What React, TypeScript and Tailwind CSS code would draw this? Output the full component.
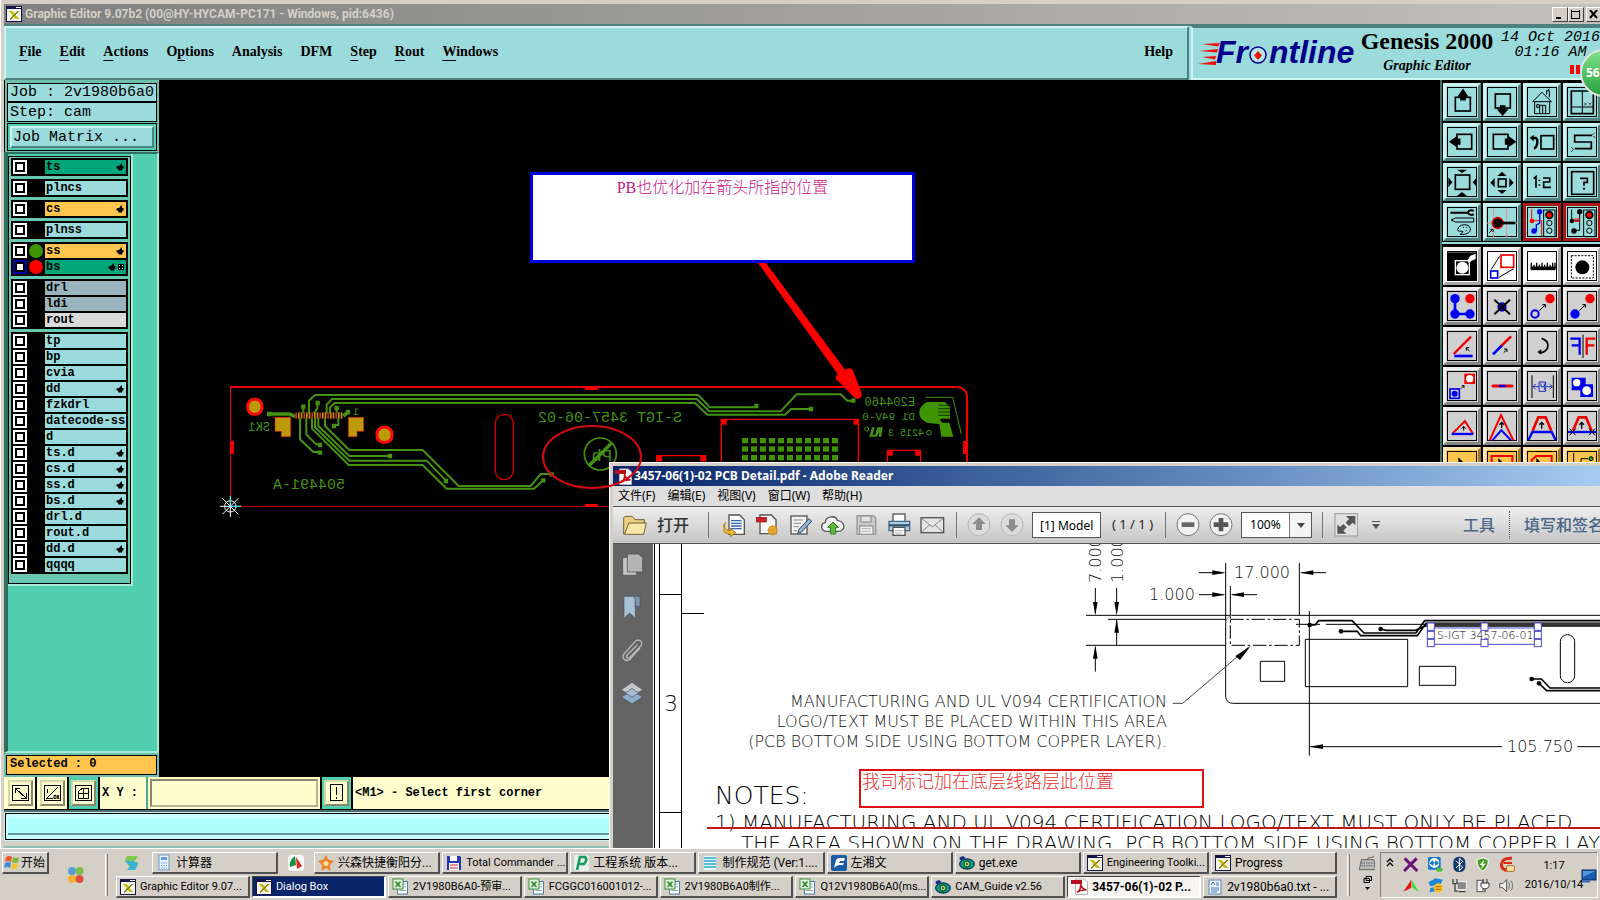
import React from 'react';

type Kids = { children?: React.ReactNode };

const MONO = "font-['Liberation_Mono',monospace]";
const UI = "font-['Noto_Sans','Noto_Sans_CJK_SC',sans-serif]";
const BAR = "font-['Roboto','Noto_Sans_CJK_SC',sans-serif]";

/* ---------- shared glyphs ---------- */

function XWindowIcon() {
  return (
    <svg width="16" height="16" viewBox="0 0 16 16" className="shrink-0" shapeRendering="crispEdges">
      <rect width="16" height="16" fill="#15154a" />
      <rect x="10" y="1" width="5" height="1" fill="#fff" />
      <rect x="1" y="3" width="14" height="12" fill="#f4f4ee" />
      <path d="M3 5h4l6 8H9z" fill="#c8c020" />
      <path d="M12.500 5L4 13.500" stroke="#8a8a10" strokeWidth="1.500" fill="none" />
    </svg>
  );
}

function Hand() {
  return (
    <svg width="8" height="8" viewBox="0 0 8 8" className="shrink-0">
      <path d="M0.500 3.600L3.400 2.800 5 0.500h1v2.500h1.500v2.500H6.600L6 7.500H2.500L2 5.400H0.500z" fill="#000" />
    </svg>
  );
}

function ExcelIcon() {
  return (
    <svg width="17" height="17" viewBox="0 0 17 17" className="shrink-0">
      <rect x="5.500" y="3.500" width="10" height="12.500" fill="#fff" stroke="#4a7db0" />
      <path d="M11 6h3M11 9h3M7 12.500h7" stroke="#8ab" />
      <rect x="1" y="1" width="10" height="10" fill="#e6f4e2" stroke="#3f8f3a" />
      <path d="M3.500 3.500l5 5.500M8.500 3.500l-5 5.500" stroke="#2c8a2c" strokeWidth="1.800" />
    </svg>
  );
}

function AdobeIcon() {
  return (
    <svg width="17" height="17" viewBox="0 0 17 17" className="shrink-0">
      <path d="M4.500 1h9l3 3v12.500h-12z" fill="#fff" stroke="#b9b0b0" />
      <path d="M0 2h11v4H0z" fill="#b5121b" />
      <path d="M6 14.500c3-2 4-5 3.500-8.500 1 4 3 5.500 6 6-4-.5-7 .5-9.500 2.500z" fill="none" stroke="#c0141d" strokeWidth="1.500" />
    </svg>
  );
}

/* ---------- title and header ---------- */

function WinButton({ label, children }: { label: string } & Kids) {
  return (
    <button aria-label={label} className="flex h-[15px] w-4 items-center justify-center border border-t-white border-l-white border-r-[#404040] border-b-[#404040] bg-[#d4d0c8]">
      <svg width="10" height="9" viewBox="0 0 10 9" fill="none" stroke="#000" shapeRendering="crispEdges">{children}</svg>
    </button>
  );
}

function TitleBar() {
  return (
    <div className="flex h-5 shrink-0 items-center overflow-hidden bg-linear-to-r from-[#808080] to-[#c4c2be] pl-[2px]">
      <XWindowIcon />
      <span className={`${BAR} ml-[3px] grow text-[12px] leading-5 font-bold whitespace-nowrap text-[#d4d0c8]`}>
        Graphic Editor 9.07b2 (00@HY-HYCAM-PC171 - Windows, pid:6436)
      </span>
      <div className="-mr-[2px] flex shrink-0">
        <WinButton label="Minimize"><path d="M1 7.500h5" strokeWidth="2" /></WinButton>
        <WinButton label="Maximize"><path d="M1 1h8M.5 0v8.500h8V0" strokeWidth="1" /></WinButton>
        <div className="w-[2px]" />
        <WinButton label="Close"><path d="M1 0l7 8M8 0L1 8" strokeWidth="2" shapeRendering="auto" /></WinButton>
      </div>
    </div>
  );
}

const MENUS: [string, string, string][] = [
  ['', 'F', 'ile'], ['', 'E', 'dit'], ['', 'A', 'ctions'], ['O', 'p', 'tions'],
  ['Analysis', '', ''], ['DFM', '', ''], ['', 'S', 'tep'], ['', 'R', 'out'], ['', 'W', 'indows'],
];

function FrontlineLogo() {
  return (
    <svg width="162" height="42" viewBox="0 -6 162 42" className="shrink-0" aria-label="Frontline">
      <g fill="#f01010">
        <path d="M5 6l18-1-2 3.500zM2 13l19-2-1 3.500zM5 19l14-1-1 3.500zM1 26l18-3v4z" />
      </g>
      <g fontFamily="Liberation Sans, sans-serif" fontWeight="700" fontStyle="italic" fontSize="32" fill="#00008b">
        <text x="19" y="25">Fr</text>
        <text x="72" y="25">ntline</text>
      </g>
      <circle cx="61" cy="17" r="8" fill="#b8e6e6" stroke="#00008b" strokeWidth="1.500" />
      <path d="M61 13l4 4.500-4 4.500-4-4.500z" fill="#f01010" />
    </svg>
  );
}

function Header() {
  return (
    <header className="flex h-14 shrink-0 border-t-2 border-[#4f8080] bg-[#9bdbdb] font-['Liberation_Serif',serif] font-bold text-black">
      <nav className="flex grow items-center gap-[18px] border-2 border-t-[#cdf3f0] border-l-[#cdf3f0] border-r-[#4f8080] border-b-[#4f8080] pr-[14px] pb-[3px] pl-[13px] text-[14px] leading-5">
        {MENUS.map(([a, u, b]) => (
          <button key={a + u + b}>
            {a}
            {u && <span className="underline underline-offset-4">{u}</span>}
            {b}
          </button>
        ))}
        <button className="ml-auto">Help</button>
      </nav>
      <div className="ml-[2px] flex w-[409px] shrink-0 border-2 border-r-0 border-t-[#4f8080] border-l-[#cdf3f0] border-b-[#cdf3f0] pl-1">
        <div className="pt-1"><FrontlineLogo /></div>
        <div className="ml-px flex w-[134px] shrink-0 flex-col items-center">
          <span className="text-[24px] leading-[26px] whitespace-nowrap">Genesis 2000</span>
          <span className="text-[14px] leading-6 italic">Graphic Editor</span>
        </div>
        <div className={`${MONO} ml-[7px] flex shrink-0 flex-col items-center pt-[2px] text-[15px] leading-[15px] font-normal italic`}>
          <span>14 Oct 2016</span>
          <span>01:16 AM</span>
          <span className="mt-[5px] ml-[48px] flex gap-[2px]">
            <span className="h-[9px] w-1 bg-[#f00]" />
            <span className="h-[9px] w-1 bg-[#f00]" />
          </span>
        </div>
      </div>
    </header>
  );
}

/* ---------- layer list ---------- */

type Layer = { n: string; bg?: string; hand?: boolean; dot?: string; active?: boolean };
const T = 'bg-[#9bdbdb]';
const GROUPS: Layer[][] = [
  [{ n: 'ts', bg: 'bg-[#00a57a]', hand: true }],
  [{ n: 'plncs' }],
  [{ n: 'cs', bg: 'bg-[#ffc54e]', hand: true }],
  [{ n: 'plnss' }],
  [
    { n: 'ss', bg: 'bg-[#ffc54e]', hand: true, dot: 'bg-[#409400]' },
    { n: 'bs', bg: 'bg-[#00a57a]', hand: true, dot: 'bg-[#ff0000]', active: true },
  ],
  [{ n: 'drl', bg: 'bg-[#9bb5be]' }, { n: 'ldi', bg: 'bg-[#9bb5be]' }, { n: 'rout', bg: 'bg-[#dadada]' }],
  [
    { n: 'tp' }, { n: 'bp' }, { n: 'cvia' }, { n: 'dd', hand: true }, { n: 'fzkdrl' }, { n: 'datecode-ss' },
    { n: 'd' }, { n: 'ts.d', hand: true }, { n: 'cs.d', hand: true }, { n: 'ss.d', hand: true },
    { n: 'bs.d', hand: true }, { n: 'drl.d' }, { n: 'rout.d' }, { n: 'dd.d', hand: true }, { n: 'qqqq' },
  ],
];

function LayerRow({ l }: { l: Layer }) {
  return (
    <label className="flex h-4 items-center">
      <input
        type="checkbox"
        className={`m-0 h-[14px] w-[14px] shrink-0 appearance-none border-2 ${l.active ? 'border-[#0000a8] bg-white' : 'border-white bg-white'} shadow-[inset_0_0_0_2px_#000]`}
      />
      <span className="flex w-[18px] shrink-0 justify-center">
        {l.dot && <span className={`h-[14px] w-[14px] rounded-full ${l.dot}`} />}
      </span>
      <span className={`flex h-[14px] min-w-0 grow items-center justify-between pl-px text-[12px] leading-[14px] font-bold whitespace-nowrap ${l.bg ?? T}`}>
        {l.n}
        {l.hand && (
          <span className="flex items-center gap-[2px] pr-[2px]">
            <Hand />
            {l.active && (
              <svg width="6" height="6" viewBox="0 0 6 6" shapeRendering="crispEdges">
                <rect width="6" height="6" fill="#000" />
                <path d="M1 1h1v1H1zM4 1h1v1H4zM1 4h1v1H1zM4 4h1v1H4z" fill="#cfe" />
              </svg>
            )}
          </span>
        )}
      </span>
    </label>
  );
}

function Sidebar() {
  return (
    <aside className={`${MONO} flex w-[155px] shrink-0 flex-col bg-[#52cfb0] text-black`}>
      <div className="shrink-0 border-l border-black bg-[#6fbfae] px-[2px] pt-[3px] pb-px text-[15px] font-medium">
        <div className="h-[19px] border border-black bg-[#9bdbdb] pl-[2px] leading-[17px] whitespace-nowrap">Job : 2v1980b6a0</div>
        <div className="h-5 border border-black bg-[#9bdbdb] pl-[2px] leading-[19px]">Step: cam</div>
        <div className="mt-px border border-black bg-[#52cfb0] p-[2px]">
          <button className="block h-[22px] w-full border-2 border-t-[#cdf3f0] border-l-[#cdf3f0] border-r-[#4f8080] border-b-[#4f8080] bg-[#9bdbdb] pl-px text-left leading-[19px]">
            Job Matrix ...
          </button>
        </div>
      </div>
      <div className="min-h-0 grow border-t-2 border-r-2 border-b-2 border-l-[4px] border-t-[#2f6f60] border-r-[#a5ead8] border-b-[#a5ead8] border-l-[#2f6f60]">
        <div className="w-[125px] border-r-2 border-b-2 border-[#a5ead8] pt-[2px]">
          <div className="flex flex-col gap-[3px] border border-black bg-[#6ac8b2] px-[2px] pt-px pb-[9px]">
            {GROUPS.map((g, i) => (
              <div key={i} className="border border-black bg-black pr-px pl-px">
                {g.map((l) => <LayerRow key={l.n} l={l} />)}
              </div>
            ))}
          </div>
        </div>
      </div>
      <div className="shrink-0 bg-[#6fbfae] px-[2px] py-[2px]">
        <div className="h-5 border border-black bg-[#ffc54e] pl-[3px] text-[12px] leading-[17px] font-bold">Selected : 0</div>
      </div>
    </aside>
  );
}

/* ---------- board view ---------- */

function Mirror({ x, y, size, children }: { x: number; y: number; size: number } & Kids) {
  return (
    <text transform={`translate(${x} ${y}) scale(-1 1)`} fontSize={size}>{children}</text>
  );
}

const GREEN = '#449310';
const sq = (x: number, y: number, s = 13) => `M${x - s / 2} ${y - s / 2}h${s}v${s}h-${s}z`;
const COLS = [0, 1, 2, 3, 4, 5, 6, 7, 8, 9, 10];
const TICKS = [0, 1, 2, 3, 4, 5, 6, 7, 8, 9, 10, 11, 12, 13, 14, 15, 16, 17];

function BoardView() {
  return (
    <main className="min-w-0 grow overflow-hidden bg-black">
      <svg className="block h-full w-full" aria-label="Board">
        <g transform="translate(-159 -80)">
          <g fill="none" stroke="#f00000" shapeRendering="crispEdges">
            <path d="M230.500 506V387" />
            <path d="M230 387H957Q967 388 967 397V506" strokeWidth="2" />
            <path d="M230 506.500H967" stroke="#c00000" />
            <path d="M232 441v13M965 441v13" strokeWidth="4" />
            <path d="M585 388h13M585 505h13" strokeWidth="3" />
          </g>
          <g transform="translate(210 370) scale(.33333)">
            <g fill="none" stroke={GREEN} strokeWidth="6">
              <path d="M297 130V92L315 75H1465L1500 112H1635" />
              <path d="M350 130V104L366 87H1460L1498 124H1712L1760 73H1892L1912 92H1930" />
              <path d="M360 130V112L374 99H1455L1492 134H1725L1743 117H1803" />
              <path d="M270 145V208L310 246H330" />
              <path d="M289 145V193L318 223H330" />
              <path d="M306 145V176L416 285H638L710 356H972L1000 330" />
              <path d="M315 145V172L418 272H650L708 332" />
              <path d="M325 145V168L418 258H540" />
              <path d="M345 145V168L418 240H638L746 348H962L992 312H1025" />
              <path d="M385 145V165H372M322 100V115L312 130M280 112V130M380 115V130" />
              <path d="M172 132H240L256 140M400 138L416 125" strokeWidth="11" />
            </g>
            <path
              fill={GREEN}
              d={[[280, 110], [323, 99], [380, 114], [372, 168], [330, 225], [330, 248], [540, 258], [708, 333], [1000, 331], [1025, 313], [178, 132], [414, 126], [1639, 108], [1930, 92], [1803, 117]].map(([x, y]) => sq(x, y)).join('')}
            />
            {TICKS.map((i) => (
              <rect key={i} x={256 + i * 8} y="127" width="5" height="19" fill={i % 3 ? '#c08a10' : '#d03000'} />
            ))}
            <g fill="#bd9a0c" stroke="#d02000" strokeWidth="2">
              <path d="M195 142h47v58h-28v-16h-19zM415 142h46v42h-20v16h-26z" />
            </g>
            <g fill="#bd9a0c" stroke="#ff0808" strokeWidth="9">
              <rect x="113" y="88" width="43" height="45" rx="20" />
              <rect x="501" y="172" width="45" height="45" rx="20" />
            </g>
            <rect x="856" y="133" width="54" height="196" rx="27" fill="none" stroke="#d00000" strokeWidth="4" />
            <g fill="none" stroke={GREEN} strokeWidth="5">
              <circle cx="1171" cy="252" r="48" />
              <path d="M1136 288L1206 218" strokeWidth="10" />
            </g>
            <g stroke="#fff" strokeWidth="3" fill="none">
              <circle cx="61" cy="409" r="17" />
              <path d="M61 378v63M30 409h63M37 385l48 48M85 385l-48 48" />
              <path d="M61 378v31M61 409h32" stroke="#30e0f0" />
            </g>
          </g>
          <g transform="translate(610 370) scale(.33333)">
            <g fill="none" stroke="#f00000" strokeWidth="4">
              <path d="M334 300V148H745V300M140 300V257H287V300M832 300V241H932V300" />
            </g>
            <path fill="#f00000" d={[[342, 156], [739, 156], [148, 265], [279, 265], [840, 249], [924, 249]].map(([x, y]) => sq(x, y, 17)).join('')} />
            {[204, 229, 255].map((y) => COLS.map((c) => (
              <rect key={`${y}-${c}`} x={396 + c * 27} y={y} width="18" height="16" fill="#409400" />
            )))}
            <path fill="#409400" d="M952 96h52l16 14v36h-28q-4 8 6 12h20l12 42h-36l-6-38-26-2c-22-4-34-16-34-32 0-14 10-26 24-32z" />
            <path d="M985 106h40M985 116h40M985 126h40M985 136h40" stroke="#000" strokeWidth="2" />
            <path d="M948 82H1028L1054 192" fill="none" stroke={GREEN} strokeWidth="3" />
            <path d="M778 200l8-28h8l-6 22h8l6-22h16l-4 28h-8l2-14-8 14z" fill={GREEN} />
            <g fill="none" stroke={GREEN} strokeWidth="3"><circle cx="770" cy="177" r="6" /><circle cx="957" cy="188" r="7" /></g>
          </g>
          <g fill={GREEN} fontFamily="Liberation Mono, monospace">
            <Mirror x={682} y={422} size={15}>S-IGT 3457-06-02</Mirror>
            <Mirror x={270} y={431} size={12}>SK1</Mirror>
            <Mirror x={359} y={415} size={10}>1</Mirror>
            <Mirror x={345} y={489} size={15}>504491-A</Mirror>
            <Mirror x={915} y={406} size={12}>E204460</Mirror>
            <Mirror x={915} y={420} size={11}>D1 94V-0</Mirror>
            <Mirror x={924} y={436} size={10}>4215 3</Mirror>
            <Mirror x={612} y={461} size={17}>Pb</Mirror>
          </g>
        </g>
      </svg>
    </main>
  );
}

/* ---------- tool palette ---------- */

function Tool({ c, r, top = 32, face, name, children }: { c: number; r: number; top?: number; face: string; name: string } & Kids) {
  const x = 47 + 120 * c;
  const y = top + 120 * r;
  return (
    <button aria-label={name} className={`block h-[38px] w-[38px] border-[3px] ${face}`}>
      <svg width="32" height="32" viewBox={`${x} ${y} 96 96`} fill="none" stroke="#000" strokeWidth="5">
        <rect x={x + 4.5} y={y + 4.5} width="87" height="87" strokeWidth="3" />
        {children}
      </svg>
    </button>
  );
}

const TEAL = 'bg-[#9bdbdb] border-t-[#cdf3f0] border-l-[#cdf3f0] border-r-[#4f8080] border-b-[#4f8080]';
const RED = 'bg-[#9bdbdb] border-[#a81818]';
const WHITE = 'bg-white border-t-[#f4f4f4] border-l-[#f4f4f4] border-r-[#a8a8a8] border-b-[#a8a8a8]';
const GRAY = 'bg-[#d0d0d0] border-t-[#f0f0f0] border-l-[#f0f0f0] border-r-[#888] border-b-[#888]';
const ORANGE = 'bg-[#ffc54e] border-t-[#ffe6b0] border-l-[#ffe6b0] border-r-[#a07820] border-b-[#a07820]';
const K = '#000';
const B = '#0000f0';
const R = '#f00000';

function Palette() {
  return (
    <aside className="flex w-40 shrink-0 flex-col overflow-hidden border-l-2 border-[#3f7068] bg-black">
      <div className="grid shrink-0 grid-cols-[38px_38px_38px_38px] gap-[2px] pt-[3px] pb-px pl-px">
        <Tool c={0} r={0} face={TEAL} name="Pan up"><rect x="75" y="66" width="45" height="41" /><path d="M92 73V62h-6l12-18 12 18h-6v11z" fill={K} /></Tool>
        <Tool c={1} r={0} face={TEAL} name="Pan down"><rect x="195" y="56" width="45" height="42" /><path d="M211 92v12h-6l12 14 12-14h-6V92z" fill={K} /></Tool>
        <Tool c={2} r={0} face={TEAL} name="Home"><path d="M307 79l28-28 28 28zM313 80v35h45V80M328 115V90h18v25M337 90v25M319 88h8v8h-8zM349 58V46h8v20M351 45l6-4" strokeWidth="3" /></Tool>
        <Tool c={3} r={0} face={TEAL} name="Coordinates"><path d="M423 47h66v68h-66z" strokeWidth="5" /><path d="M423 95h66M456 47v68" strokeWidth="3" /><path d="M462 82l7 8M469 82l-7 8M475 82l4 4 4-4M479 86v4" strokeWidth="2" /></Tool>
        <Tool c={0} r={1} face={TEAL} name="Pan left"><rect x="80" y="177" width="44" height="44" /><path d="M88 192H77v-5l-17 12 17 12v-5h11z" fill={K} /></Tool>
        <Tool c={1} r={1} face={TEAL} name="Pan right"><rect x="189" y="177" width="44" height="44" /><path d="M226 192h11v-5l17 12-17 12v-5h-11z" fill={K} /></Tool>
        <Tool c={2} r={1} face={TEAL} name="Previous view"><rect x="332" y="181" width="38" height="40" /><path d="M307 188h10c6 4 6 26-6 32" strokeWidth="7" /><path d="M298 188l12-10v20z" fill={K} stroke="none" /></Tool>
        <Tool c={3} r={1} face={TEAL} name="Serpent"><path d="M485 180h-52v20h50v20h-50" strokeWidth="5" /><path d="M485 180l8-8M488 182l8 6M430 222l-8-6M430 222l-8 8" strokeWidth="2" /></Tool>
        <Tool c={0} r={2} face={TEAL} name="Zoom in"><rect x="75" y="299" width="43" height="43" /><path d="M80 283h30l-15 10zM80 362h30l-15-12zM54 306v30l12-15zM140 306v30l-13-15z" fill={K} stroke="none" /></Tool>
        <Tool c={1} r={2} face={TEAL} name="Zoom out"><rect x="204" y="311" width="23" height="23" /><path d="M201 302l14-13 14 13zM201 344l14 12 14-12zM193 308v28l-13-14zM237 308v28l13-14z" fill={K} stroke="none" /></Tool>
        <Tool c={2} r={2} face={TEAL} name="Scale 1:2"><path d="M310 310l7-6v33M327 313v4M327 327v4M338 308h20v12h-18v16h22" strokeWidth="5" /></Tool>
        <Tool c={3} r={2} face={TEAL} name="Help"><rect x="424" y="289" width="66" height="68" /><path d="M449 309h22v12h-10v10M461 337v6" strokeWidth="5" /></Tool>
        <Tool c={0} r={3} face={TEAL} name="Setup"><path d="M60 412h52M130 407c-4-4-14-4-18 5 4 8 14 8 18 4" strokeWidth="6" /><path d="M62 434l14-6h54v12H76z" strokeWidth="3" /><path d="M82 463c2-18 34-20 38-4 2 14-14 20-30 18l8-8c-6-4-16 2-16-6zM98 456h3M108 456h3M106 466h3" strokeWidth="3" /></Tool>
        <Tool c={1} r={3} face={TEAL} name="Snap"><path d="M190 398v90M229 398v90M170 443h90" stroke="#e89090" strokeWidth="3" /><circle cx="202" cy="443" r="16" fill={K} stroke="#d00000" /><path d="M215 443h40" strokeWidth="8" /><path d="M177 472l10-10M180 462h8v8" strokeWidth="3" /></Tool>
        <Tool c={2} r={3} face={RED} name="Net color on"><rect x="340" y="404" width="34" height="80" strokeWidth="3" /><circle cx="357" cy="419" r="10" fill="#f00" /><circle cx="357" cy="443" r="8" strokeWidth="3" /><circle cx="357" cy="466" r="8" strokeWidth="3" /><path d="M304 402v34h30M334 436v46" stroke="#f00000" strokeWidth="3" /><path d="M328 408v36l-10 4v20" stroke={B} strokeWidth="4" /><circle cx="305" cy="437" r="7" fill="#f00" stroke="none" /><circle cx="328" cy="409" r="8" fill={B} stroke="none" /><circle cx="311" cy="467" r="8" fill={B} stroke="none" /></Tool>
        <Tool c={3} r={3} face={RED} name="Net color off"><rect x="460" y="404" width="34" height="80" strokeWidth="3" /><circle cx="477" cy="419" r="10" fill="#f00" /><circle cx="477" cy="443" r="8" strokeWidth="3" /><circle cx="477" cy="466" r="8" strokeWidth="3" /><path d="M424 402v34h24M448 409v56h-16" strokeWidth="3" /><path d="M434 428v10h12M440 428v8M446 426v12" stroke="#f00" strokeWidth="3" /><circle cx="425" cy="437" r="7" fill={K} stroke="none" /><circle cx="448" cy="409" r="8" fill={K} stroke="none" /><circle cx="431" cy="467" r="8" fill={K} stroke="none" /></Tool>
      </div>
      <div className="grid shrink-0 grid-cols-[38px_38px_38px_38px] gap-[2px] border-t-2 border-[#9bdbdb] pt-[3px] pl-px">
        <Tool c={0} r={0} top={524} face={WHITE} name="Invert"><rect x="53" y="531" width="86" height="84" fill={K} stroke="none" /><rect x="75" y="556" width="42" height="42" stroke="#fff" strokeWidth="4" /><circle cx="96" cy="577" r="18" fill="#fff" stroke="none" /><path d="M112 555l8-14 16-6v16l-14 6-6 8z" fill="#fff" stroke="none" /></Tool>
        <Tool c={1} r={0} top={524} face={WHITE} name="Copy shape"><rect x="212" y="539" width="38" height="37" stroke={R} strokeWidth="5" /><rect x="181" y="587" width="21" height="21" stroke={B} strokeWidth="5" /><path d="M182 583l26-40M206 606l44-26" strokeWidth="3" /></Tool>
        <Tool c={2} r={0} top={524} face={WHITE} name="Measure"><path d="M303 580v-18M311 580v-12M319 580v-18M327 580v-12M335 580v-18M343 580v-12M351 580v-18M359 580v-12M367 580v-18M374 580v-18" strokeWidth="4" /><path d="M301 579h74" strokeWidth="11" /></Tool>
        <Tool c={3} r={0} top={524} face={WHITE} name="Select pad"><rect x="423" y="541" width="66" height="67" strokeWidth="3" strokeDasharray="6 4" /><circle cx="456" cy="576" r="21" fill={K} stroke="none" /></Tool>
        <Tool c={0} r={1} top={524} face={GRAY} name="Connect"><path d="M74 670v46h45" stroke={B} strokeWidth="8" /><g stroke="none" fill={B}><circle cx="74" cy="670" r="14" /><circle cx="74" cy="716" r="14" /><circle cx="119" cy="716" r="14" /><circle cx="119" cy="670" r="14" fill={R} /></g></Tool>
        <Tool c={1} r={1} top={524} face={GRAY} name="Delete"><circle cx="215" cy="695" r="14" fill="#0000b0" stroke="none" /><path d="M192 673l47 44M239 673l-47 44" strokeWidth="6" /></Tool>
        <Tool c={2} r={1} top={524} face={GRAY} name="Copy"><circle cx="314" cy="716" r="11" stroke={B} strokeWidth="6" /><circle cx="359" cy="670" r="14" fill={R} stroke="none" /><path d="M327 706l18-18M336 688h9v9" strokeWidth="3" /></Tool>
        <Tool c={3} r={1} top={524} face={GRAY} name="Move"><circle cx="434" cy="716" r="14" fill={B} stroke="none" /><circle cx="479" cy="670" r="14" fill={R} stroke="none" /><path d="M447 706l18-18M456 688h9v9" strokeWidth="3" /></Tool>
        <Tool c={0} r={2} top={524} face={GRAY} name="Rotate"><path d="M70 836l52-52" stroke={R} strokeWidth="7" /><path d="M72 842h55" stroke={B} strokeWidth="8" /><path d="M118 828l-10-10M108 826v-9h9" strokeWidth="3" /></Tool>
        <Tool c={1} r={2} top={524} face={GRAY} name="Stretch"><path d="M188 837l28-28" stroke={B} strokeWidth="8" /><path d="M214 811l28-28" stroke={R} strokeWidth="8" /><path d="M220 832l10-10M221 821h9v9" strokeWidth="3" /></Tool>
        <Tool c={2} r={2} top={524} face={GRAY} name="Undo"><path d="M334 789c26 8 26 40-6 44" strokeWidth="5" /><path d="M321 830l12-8v16z" fill={K} stroke="none" /></Tool>
        <Tool c={3} r={2} top={524} face={GRAY} name="Mirror"><path d="M420 790h28v48M424 810h24" stroke={B} strokeWidth="7" /><path d="M495 790h-26v48M492 810h-24" stroke={R} strokeWidth="7" /><path d="M458 778v70" strokeWidth="3" /></Tool>
        <Tool c={0} r={3} top={524} face={GRAY} name="Replace"><rect x="59" y="941" width="28" height="28" stroke={B} /><circle cx="73" cy="955" r="9" fill={B} stroke="none" /><rect x="102" y="895" width="32" height="31" fill={R} stroke="none" /><circle cx="118" cy="910" r="11" fill="#fff" stroke="none" /><path d="M92 940l9-9M94 931h7v7" strokeWidth="3" /></Tool>
        <Tool c={1} r={3} top={524} face={GRAY} name="Join"><path d="M188 932h57" stroke={R} strokeWidth="9" strokeLinecap="round" /><path d="M206 932h20" stroke={B} strokeWidth="7" /></Tool>
        <Tool c={2} r={3} top={524} face={GRAY} name="Spacing"><path d="M305 900v68M369 900v68" strokeWidth="3" /><path d="M308 934h18M348 934h18M316 926l-8 8 8 8M358 926l8 8-8 8M326 920h20v28h-20zM332 924v10h10v-10M342 934v10" stroke="#2030c0" strokeWidth="3" /></Tool>
        <Tool c={3} r={3} top={524} face={GRAY} name="Merge"><path d="M424 907h42v20h22v38h-38v-20h-26z" fill={B} stroke="none" /><circle cx="439" cy="922" r="11" fill="#fff" stroke="none" /><circle cx="469" cy="946" r="13" fill="#fff" stroke="none" /></Tool>
        <Tool c={0} r={4} top={524} face={GRAY} name="Triangle"><path d="M66 1075l38-38 24 38" stroke={R} strokeWidth="6" /><path d="M64 1076h65" stroke={B} strokeWidth="7" /><path d="M100 1066v-12M94 1060l6-7 6 7" strokeWidth="3" /></Tool>
        <Tool c={1} r={4} top={524} face={GRAY} name="Raise corner"><path d="M178 1095l34-76 37 76" stroke={R} strokeWidth="6" /><path d="M186 1095l27-30 29 30" stroke={B} strokeWidth="6" /><path d="M214 1058v-16M207 1048l7-7 7 7" strokeWidth="4" /></Tool>
        <Tool c={2} r={4} top={524} face={GRAY} name="Raise segment"><path d="M307 1066l17-40h22l17 40" stroke={R} strokeWidth="8" /><path d="M294 1095l12-25h58l12 25" stroke={B} strokeWidth="7" /><path d="M334 1060v-18M327 1048l7-7 7 7" strokeWidth="4" /></Tool>
        <Tool c={3} r={4} top={524} face={GRAY} name="Cut segment"><path d="M428 1066l17-40h22l17 40" stroke={R} strokeWidth="8" /><path d="M413 1070h84" stroke={B} strokeWidth="7" /><path d="M454 1060v-18M447 1048l7-7 7 7" strokeWidth="4" /><path d="M418 1060l18 20M436 1060l-18 20M476 1060l18 20M494 1060l-18 20" strokeWidth="3" /></Tool>
        <Tool c={0} r={5} top={524} face={ORANGE} name="Select"><path d="M84 1146l26 26h-26z" fill={K} stroke="none" /></Tool>
        <Tool c={1} r={5} top={524} face={ORANGE} name="Select rectangle"><path d="M184 1180v-38h62v38" stroke={R} strokeWidth="6" /><path d="M204 1148l26 26h-26z" fill={K} stroke="none" /></Tool>
        <Tool c={2} r={5} top={524} face={ORANGE} name="Select polygon"><path d="M304 1180v-26l14-12h46v38" stroke={R} strokeWidth="6" /><path d="M318 1148l26 26h-26z" fill={K} stroke="none" /></Tool>
        <Tool c={3} r={5} top={524} face={ORANGE} name="Select net"><path d="M430 1133v40M452 1173v-23h22" strokeWidth="3" /><circle cx="482" cy="1150" r="6" fill="#20b020" strokeWidth="3" /></Tool>
      </div>
    </aside>
  );
}

/* ---------- command line ---------- */

function CmdButton({ label, teal, children }: { label: string; teal?: boolean } & Kids) {
  return (
    <button aria-label={label} className={`flex h-full shrink-0 items-center justify-center border-r-2 border-black ${teal ? 'w-[31px] bg-[#52cfb0]' : 'w-8 bg-[#ffffce]'}`}>
      <span className="flex h-[26px] w-[25px] items-center justify-center border-2 border-t-[#d6d6a8] border-l-[#d6d6a8] border-r-[#88886a] border-b-[#88886a] bg-[#ffffce]">
        <svg width="19" height="20" viewBox="0 0 19 20" fill="none" stroke="#000" shapeRendering="crispEdges">{children}</svg>
      </span>
    </button>
  );
}

function CommandLine() {
  return (
    <>
      <div className={`${MONO} flex h-[33px] shrink-0 items-center border-b border-black bg-[#ffffce] pl-px text-[12px] font-bold text-black`}>
        <CmdButton label="Corner to corner"><rect x="1.500" y="2.500" width="16" height="15" /><path d="M4 5l11 10M4.500 10V5.500H9M10 15.500h5.500V10" /></CmdButton>
        <CmdButton label="Angle"><rect x="1.500" y="2.500" width="16" height="15" /><path d="M3 15.500h7M4.500 6v4" /><path d="M3 16L15 4M11 12.500h2v3h-2zM14 12l2 4M16 12l-2 4" shapeRendering="auto" /></CmdButton>
        <CmdButton label="Grid" teal><rect x="1.500" y="2.500" width="16" height="15" /><path d="M4.500 15.500V8.500L8 5.500h6.500v10zM9.500 5v10M4 10.500h10" /></CmdButton>
        <label htmlFor="xy" className="w-[46px] shrink-0 pl-[2px] whitespace-nowrap">X Y :</label>
        <span className="flex h-full w-[176px] shrink-0 border-r-2 border-l-2 border-r-black border-l-[#52a890] p-[2px]">
          <input id="xy" className="min-w-0 grow rounded-none border-2 border-t-[#8a8a70] border-l-[#8a8a70] border-r-[#b4b490] border-b-[#b4b490] bg-[#ffffce] px-1" />
        </span>
        <CmdButton label="Alert" teal><rect x="3.500" y="1.500" width="12" height="16" /><path d="M9.500 4v8M9.500 14v2" strokeWidth="1.800" /></CmdButton>
        <span className="ml-[2px] whitespace-nowrap">&lt;M1&gt; - Select first corner</span>
      </div>
      <div className="h-[38px] shrink-0 border-b-2 border-[#8fc0b8] bg-[#d4d0c8]">
        <div className="h-[31px] border-t-2 border-[#4f6f70] bg-[#c8f0f0] p-px">
          <div className="h-[27px] border border-black bg-[#c8ffff] px-[2px] pt-1 pb-1">
            <div className="h-full border-b-2 border-[#5f9a9a] bg-[#afffff]" />
          </div>
        </div>
      </div>
    </>
  );
}

/* ---------- document window ---------- */

function Sep({ className = '' }: { className?: string }) {
  return <span className={`h-[26px] w-px shrink-0 bg-[#777] ${className}`} />;
}

function PdfTool({ name, x, w, className, children }: { name: string; x: number; w: number; className: string } & Kids) {
  return (
    <button aria-label={name} className={`shrink-0 ${className}`}>
      <svg width={w} height="24" viewBox={`${x} 159 ${w * 3} 72`} fill="none" stroke="#555" strokeWidth="4" className="block">{children}</svg>
    </button>
  );
}

function PdfToolbar() {
  return (
    <div className={`${UI} flex h-[38px] shrink-0 items-center overflow-hidden border-t border-b border-[#555] bg-linear-to-b from-[#eee] to-[#c6c6c6] text-[#333]`}>
      <button className="ml-[10px] flex shrink-0 items-center gap-[10px] text-[16px] leading-5 font-medium">
        <svg width="24" height="22" viewBox="68 162 72 64" stroke="#7a6030" strokeWidth="3"><path d="M70 222V172l6-4h20l8 10h28v12" fill="#e8d088" /><path d="M72 222l14-34h52l-8 34z" fill="#f6e6a8" /></svg>
        <span>打开</span>
      </button>
      <Sep className="ml-[19px]" />
      <PdfTool name="Export" x={368} w={23} className="ml-[14px]"><path d="M386 165h32l14 14v44h-46z" fill="#fafafa" /><path d="M392 182h32M392 190h32M392 198h32M392 206h32" stroke="#2f6ab0" /><path d="M376 188c-8 14-2 24 14 24v-8l16 14-16 12v-8c-24 0-30-20-14-34z" fill="#f0b840" stroke="#b07818" strokeWidth="3" /></PdfTool>
      <PdfTool name="Create PDF" x={468} w={23} className="ml-[10px]"><path d="M480 165h34l14 14v42h-48z" fill="#fafafa" /><rect x="469" y="172" width="30" height="14" fill="#d02028" stroke="#901018" strokeWidth="2" /><circle cx="518" cy="211" r="12" fill="#f4c040" stroke="#c08820" /><path d="M518 195v32M502 211h32M507 200l22 22M529 200l-22 22" stroke="#e0a030" /></PdfTool>
      <PdfTool name="Edit" x={571} w={22} className="ml-[11px]"><rect x="574" y="168" width="48" height="54" fill="#f2f2f2" /><path d="M582 180h28M582 190h22M582 200h16M582 212h10" stroke="#888" strokeWidth="3" /><path d="M628 176l8 8-30 32-12 4 4-12z" fill="#8fb4d4" stroke="#345" strokeWidth="3" /></PdfTool>
      <PdfTool name="Cloud" x={663} w={24} className="ml-[9px]"><path d="M680 214c-18 0-20-24-4-26 0-20 32-24 36-6 22 0 28 30 4 32z" fill="#f4f4f4" /><path d="M699 186l16 16h-8v20h-16v-20h-8z" fill="#62b83c" stroke="#2f7a18" strokeWidth="3" /></PdfTool>
      <PdfTool name="Save" x={767} w={21} className="ml-[11px]"><g stroke="#999"><path d="M770 167h50l6 6v50h-56z" fill="#c8c8c8" /><rect x="782" y="168" width="30" height="18" fill="#e4e4e4" /><rect x="778" y="198" width="40" height="25" fill="#eee" /><path d="M784 206h28M784 214h28" strokeWidth="2" /></g></PdfTool>
      <PdfTool name="Print" x={863} w={23} className="ml-[11px]"><rect x="878" y="162" width="36" height="24" fill="#fff" /><path d="M866 184h62v28h-62z" fill="#b8cede" stroke="#40688a" /><path d="M866 196h62" stroke="#2f5878" strokeWidth="7" /><rect x="878" y="202" width="36" height="24" fill="#fff" /><path d="M884 212h24M884 219h20" stroke="#888" strokeWidth="2" /></PdfTool>
      <PdfTool name="Mail" x={959} w={25} className="ml-[9px]"><rect x="962" y="173" width="68" height="45" fill="#e4e4e4" /><path d="M964 175l32 26 32-26M964 216l24-22M1028 216l-24-22" strokeWidth="2" /></PdfTool>
      <Sep className="ml-[11px]" />
      <PdfTool name="Previous page" x={1100} w={24} className="ml-[10px]"><circle cx="1136" cy="194" r="33" fill="#dcdcdc" stroke="#b4b4b4" strokeWidth="3" /><path d="M1136 172l20 20h-11v18h-18v-18h-11z" fill="#8c8c8c" stroke="none" /></PdfTool>
      <PdfTool name="Next page" x={1198} w={24} className="ml-[9px]"><circle cx="1234" cy="194" r="33" fill="#dcdcdc" stroke="#b4b4b4" strokeWidth="3" /><path d="M1234 216l20-20h-11v-18h-18v18h-11z" fill="#8c8c8c" stroke="none" /></PdfTool>
      <input aria-label="Page" defaultValue="[1] Model" className="ml-2 h-[26px] w-[69px] shrink-0 rounded-none border border-[#555] bg-white px-[7px] text-[12px] text-black" />
      <span className="ml-[11px] shrink-0 text-[13px] whitespace-pre text-[#222]">( 1 / 1 )</span>
      <Sep className="ml-3" />
      <PdfTool name="Zoom out" x={290} w={24} className="ml-[10px]"><circle cx="326" cy="194" r="33" fill="#f0f0f0" stroke="#777" strokeWidth="3" /><rect x="307" y="187" width="38" height="14" fill="#666" stroke="none" /></PdfTool>
      <PdfTool name="Zoom in" x={388} w={24} className="ml-[9px]"><circle cx="424" cy="194" r="33" fill="#f0f0f0" stroke="#777" strokeWidth="3" /><path d="M417 174h14v13h15v14h-15v13h-14v-13h-15v-14h15z" fill="#555" stroke="none" /></PdfTool>
      <div className="ml-2 flex h-[26px] w-[71px] shrink-0 border border-[#555] bg-white">
        <input aria-label="Zoom" defaultValue="100%" className="w-12 rounded-none border-r border-[#777] pl-2 text-[12px] text-black" />
        <button aria-label="Zoom levels" className="flex grow items-center justify-center bg-[#f4f4f4]"><svg width="8" height="5" viewBox="0 0 8 5"><path d="M0 0h8L4 5z" fill="#444" /></svg></button>
      </div>
      <Sep className="ml-[10px]" />
      <PdfTool name="Read mode" x={764} w={24} className="ml-[11px]"><rect x="767" y="161" width="68" height="67" fill="#e0e0e0" stroke="#999" strokeWidth="3" /><path d="M828 168v28l-8-8-11 10-10-10 10-11-9-9zM774 221v-28l8 8 10-9 10 10-10 10 9 9z" fill="#555" stroke="none" /></PdfTool>
      <button aria-label="More" className="ml-[14px] shrink-0"><svg width="8" height="8" viewBox="0 0 8 8"><path d="M0 .5h8" stroke="#555" /><path d="M0 3h8L4 8z" fill="#555" /></svg></button>
      <div className="flex grow items-center overflow-hidden text-[16px] leading-5 font-medium whitespace-nowrap text-[#4a6688]">
        <button className="ml-[83px] shrink-0">工具</button>
        <span className="ml-[14px] h-7 shrink-0 border-l border-dotted border-[#555]" />
        <button className="ml-[14px] shrink-0">填写和签名</button>
      </div>
    </div>
  );
}

function NavRail() {
  return (
    <div className="flex w-10 shrink-0 flex-col items-center gap-[19px] bg-[#646464] pt-2 pr-[2px]">
      <button aria-label="Pages"><svg width="24" height="24" viewBox="60 276 72 72" stroke="#444" strokeWidth="2" className="block"><path d="M68 292h42v54H68z" fill="#c4c4c4" /><path d="M82 282h34l12 12v42H82z" fill="#b4b4b4" /></svg></button>
      <button aria-label="Bookmarks"><svg width="24" height="24" viewBox="60 406 72 72" stroke="#456" strokeWidth="2" className="block"><path d="M72 410h34v66l-17-16-17 16z" fill="#a8c0d4" /><path d="M100 410h20v30h-14v-20z" fill="#8098ac" /></svg></button>
      <button aria-label="Attachments"><svg width="24" height="24" viewBox="60 536 72 72" fill="none" stroke="#b8b8b8" strokeWidth="4" className="block"><path d="M112 556l-30 30c-6 8 2 14 8 8l32-34c10-12-6-24-16-14l-34 38c-10 14 8 26 20 14l28-32" /></svg></button>
      <button aria-label="Layers"><svg width="24" height="24" viewBox="60 666 72 72" stroke="#456" strokeWidth="2" className="block"><path d="M64 714l32-18 32 18-32 20z" fill="#8fb0cc" /><path d="M64 692l32-22 32 22-32 20z" fill="#c8c8c8" /><path d="M76 702l20-14 20 14-20 13z" fill="#a4bccc" /></svg></button>
    </div>
  );
}

function DocumentPage() {
  return (
    <svg className="block h-full w-full bg-white" aria-label="PCB Detail">
      <g transform="translate(-653 -544)">
        <g stroke="#000" fill="none" shapeRendering="crispEdges">
          <path d="M654.500 544V850M659.500 544V850M681.500 544V850M660 594.500h21M682 613.500h22M660 812.500h21" />
        </g>
        <g transform="translate(1080 460) scale(.33333)">
          <g stroke="#000" strokeWidth="3" fill="none">
            <path d="M18 466H1600M84 478H436M18 556H437M437 309V712Q440 730 460 730H1600M451 378V476M658 309V466" />
            <path d="M437 490Q438 470 458 465" stroke="#777" />
            <path d="M357 338H430M664 338H738M357 404H430M456 404H531M46 384V460M110 384V460M110 484V556M46 562V635M110 480V500" />
            <path d="M278 730H308L505 562" stroke="#444" />
            <path d="M451 478H658V556H451z" strokeDasharray="40 8 8 8" />
            <path d="M688 453V887M648 493H720M738 493H1040" />
            <path d="M676 538H983V680H676zM541 604H614V664H541zM1018 619H1127V676H1018z" />
            <rect x="1441" y="524" width="43" height="144" rx="21" />
            <path d="M688 495H705L716 482H816L852 519H1008L1034 482H1600M783 514H832L842 527H1012L1038 490H1600M902 507L918 511H1006L1036 498H1600M1355 657H1384L1410 684H1600M1377 670L1400 692H1600" strokeWidth="5" />
            <path d="M1040 493H1600" strokeWidth="9" stroke="#333" />
            <path d="M690 860H1266M1492 860H1600" />
          </g>
          <path d="M437 338l-40-7v14zM660 338l40-7v14zM437 404l-40-7v14zM452 404l40-7v14zM46 466l-7-40h14zM110 466l-7-40h14zM110 478l-7 40h14zM46 556l-7 40h14zM512 558l-46 30 14 12zM689 860l40-7v14z" fill="#000" />
          <g fill="#000"><circle cx="689" cy="495" r="7" /><circle cx="783" cy="514" r="7" /><circle cx="902" cy="507" r="7" /><circle cx="1355" cy="657" r="7" /><circle cx="1377" cy="670" r="7" /></g>
          <g stroke="#4848c8" strokeWidth="3" fill="#fff">
            <path d="M1050 504H1374V553H1050z" fill="none" />
            {[[1053, 500], [1214, 500], [1374, 500], [1053, 525], [1374, 525], [1053, 549], [1214, 549], [1374, 549]].map(([x, y]) => (
              <rect key={`${x}-${y}`} x={x - 11} y={y - 11} width="21" height="22" />
            ))}
          </g>
        </g>
        <g fill="#111" fontFamily="DejaVu Sans, sans-serif" fontWeight="200">
          <text x="1437" y="639" fontSize="11" fill="#000">S-IGT 3457-06-01</text>
          <text x="1234" y="578" fontSize="16">17.000</text>
          <text x="1149" y="600" fontSize="16">1.000</text>
          <text x="1507" y="752" fontSize="16">105.750</text>
          <text transform="translate(1101 583) rotate(-90)" fontSize="16">7.000</text>
          <text transform="translate(1123 583) rotate(-90)" fontSize="16">1.000</text>
          <text x="664" y="711" fontSize="22">3</text>
          <g fontSize="16" textAnchor="end">
            <text x="1167" y="707">MANUFACTURING AND UL V094 CERTIFICATION</text>
            <text x="1167" y="727">LOGO/TEXT MUST BE PLACED WITHIN THIS AREA</text>
            <text x="1167" y="747">(PCB BOTTOM SIDE USING BOTTOM COPPER LAYER).</text>
          </g>
          <g fill="#000">
            <text x="715" y="804" fontSize="25">NOTES:</text>
            <g fontSize="20">
              <text x="715" y="829">1) MANUFACTURING AND UL V094 CERTIFICATION LOGO/TEXT MUST ONLY BE PLACED</text>
              <text x="741" y="850">THE AREA SHOWN ON THE DRAWING. PCB BOTTOM SIDE USING BOTTOM COPPER LAYER</text>
            </g>
          </g>
        </g>
        <path d="M707 828H1600" stroke="#c01818" strokeWidth="2" />
        <rect x="860" y="770" width="343" height="37" fill="#fff" stroke="#e01010" strokeWidth="2" />
        <text x="862" y="788" fontSize="18" fontWeight="300" fontFamily="Noto Sans CJK SC, sans-serif" fill="#e83030">我司标记加在底层线路层此位置</text>
      </g>
    </svg>
  );
}

function ReaderWindow() {
  return (
    <section className="absolute top-[462px] right-0 bottom-[52px] left-[609px] flex flex-col overflow-hidden border-l border-t border-white bg-[#d4d0c8] pt-[3px] pl-[3px]">
      <div className="flex h-5 shrink-0 items-center bg-linear-to-r from-[#0a246a] to-[#a6caf0] pl-[2px]">
        <AdobeIcon />
        <span className={`${UI} ml-[2px] text-[12px] leading-5 font-bold whitespace-nowrap text-white`}>3457-06(1)-02 PCB Detail.pdf - Adobe Reader</span>
      </div>
      <nav className={`${UI} flex h-5 shrink-0 items-center gap-[12px] bg-[#dedede] pl-[5px] text-[12px] text-black`}>
        {['文件(F)', '编辑(E)', '视图(V)', '窗口(W)', '帮助(H)'].map((m) => <button key={m}>{m}</button>)}
      </nav>
      <PdfToolbar />
      <div className="flex min-h-0 grow">
        <NavRail />
        <div className="min-w-0 grow"><DocumentPage /></div>
      </div>
    </section>
  );
}

/* ---------- annotations ---------- */

function Annotations() {
  return (
    <>
      <div className="absolute top-[172px] left-[530px] h-[91px] w-[385px] border-[3px] border-[#0000dc] bg-white pt-px text-center font-['Liberation_Serif','Noto_Sans_CJK_SC',serif] text-[16px] leading-6 font-light text-[#c71585]">
        PB也优化加在箭头所指的位置
      </div>
      <svg className="pointer-events-none absolute top-[263px] left-[530px]" width="340" height="240" viewBox="530 263 340 240">
        <path d="M758 263h8l80 108-7 5z" fill="#f00" />
        <path d="M838 379q-2-1 0-3l10-6q3-1 4 2l8 21q1 5-4 4z" fill="#f00" stroke="#f00" strokeWidth="3" strokeLinejoin="round" />
        <ellipse cx="592" cy="457" rx="49" ry="31" fill="none" stroke="#d00c10" strokeWidth="2" />
      </svg>
      <div className="absolute top-[49px] -right-7 h-12 w-12 rounded-full border-2 border-[#e4e4e4] bg-linear-to-b from-[#7fe08c] to-[#1fa23c] pl-1 font-['Noto_Sans',sans-serif] text-[12px] leading-[44px] font-bold text-white">
        56
      </div>
    </>
  );
}

/* ---------- task bar ---------- */

function Task({ icon, label, state, size = 'text-[11px]' }: { icon: React.ReactNode; label: string; state?: 'selected' | 'pressed'; size?: string }) {
  const look =
    state === 'selected'
      ? 'bg-[#0a246a] text-white border-t-[#404040] border-l-[#404040] border-r-white border-b-white'
      : state === 'pressed'
        ? 'bg-[#f6f5f2] text-black font-bold border-t-[#404040] border-l-[#404040] border-r-white border-b-white'
        : 'bg-[#d4d0c8] text-black border-t-white border-l-white border-r-[#505050] border-b-[#505050]';
  return (
    <button className={`flex h-[22px] min-w-0 flex-1 items-center gap-1 border-t border-l border-r-2 border-b-2 pl-[3px] ${size} ${look}`}>
      {icon}
      <span className="truncate">{label}</span>
    </button>
  );
}

const LARGE = 'text-[12px]';

function Pic({ x, y, w = 16, children }: { x: number; y: number; w?: number } & Kids) {
  return <svg width={w} height="16" viewBox={`${x} ${y} ${w * 3} 48`} className="shrink-0">{children}</svg>;
}

function Bird() {
  return (
    <Pic x={845} y={525}>
      <path d="M847 532l10-4 8 6-6 6h-12z" fill="#20308a" />
      <ellipse cx="869" cy="552" rx="22" ry="15" fill="#189a98" stroke="#053f48" strokeWidth="4" />
      <circle cx="869" cy="552" r="9" fill="#c8e040" stroke="#064" strokeWidth="4" />
      <circle cx="869" cy="552" r="3" fill="#20308a" />
    </Pic>
  );
}

function TaskBar() {
  return (
    <footer className={`${BAR} flex h-[52px] shrink-0 border-t border-white bg-[#d4d0c8] text-[12px] leading-4 text-black`}>
      <button className="mt-[3px] ml-[2px] flex h-[22px] w-[47px] shrink-0 items-center border-t border-l border-r-2 border-b-2 border-t-white border-l-white border-r-[#505050] border-b-[#505050] whitespace-nowrap">
        <svg width="18" height="18" viewBox="0 0 18 18" className="shrink-0">
          <path d="M3 3q3-2 6 0l-1 5q-3-2-6 0z" fill="#e8582c" /><path d="M10 3q3 2 6 0l-1 5q-3 2-6 0z" fill="#7cb83c" />
          <path d="M2 9q3-2 6 0l-1 5q-3-2-6 0z" fill="#3c8cd8" /><path d="M9 9q3 2 6 0l-1 5q-3 2-6 0z" fill="#f4c430" />
        </svg>
        开始
      </button>
      <div className="flex w-14 shrink-0 items-center justify-center pr-[2px]">
        <svg width="18" height="18" viewBox="0 0 18 18">
          <circle cx="5" cy="5" r="4" fill="#5a9ad8" /><circle cx="12.500" cy="5" r="4" fill="#7cc04c" />
          <circle cx="5" cy="13" r="4" fill="#f0b030" /><circle cx="12.500" cy="13" r="4" fill="#e0503c" />
        </svg>
      </div>
      <span className="mt-[5px] mr-2 h-[42px] w-[3px] shrink-0 border-l border-white border-r border-r-[#808080]" />
      <div className="flex min-w-0 grow flex-col gap-[2px] pt-[3px]">
        <div className="flex gap-[2px]">
          <div className="flex w-[34px] shrink-0 items-center justify-center pr-[2px]">
            <svg width="16" height="16" viewBox="0 0 16 16"><path d="M3 1h11l-3 5H1zM5 7h9l-1 4-9 0z" fill="#7cc84c" /><path d="M1 6h9l4 3-3 6H3l3-4z" fill="#3cb0d0" /></svg>
          </div>
          <Task size={LARGE} label="计算器" icon={<svg width="16" height="17" viewBox="0 0 16 17" className="shrink-0"><rect x="3" y="1" width="10" height="15" fill="#e8f2fc" stroke="#6a9cc8" /><rect x="5" y="3" width="6" height="3" fill="#60a0dc" /><path d="M5 9h6M5 11.500h6M5 14h6" stroke="#6a9cc8" strokeDasharray="1.500 1" /></svg>} />
          <div className="flex w-8 shrink-0 items-center justify-center">
            <svg width="16" height="16" viewBox="0 0 16 16"><rect width="16" height="16" rx="3" fill="#fafafa" /><path d="M7 1C3 4 1 8 2 12l6-2z" fill="#189040" /><path d="M8 2l6 9-5 3z" fill="#e02020" /></svg>
          </div>
          <Task size={LARGE} label="兴森快捷衡阳分..." icon={<svg width="16" height="16" viewBox="0 0 16 16" className="shrink-0"><path d="M8 0l2.500 4.500L16 6l-4 4 .5 6L8 13l-4.500 3L4 10 0 6l5.500-1.500z" fill="#e8862c" /><circle cx="8" cy="8.500" r="2.500" fill="#fbe0a0" /></svg>} />
          <Task label="Total Commander ..." icon={<svg width="16" height="16" viewBox="0 0 16 16" className="shrink-0"><path d="M1 1h13l1 1v13H1z" fill="#2038b8" /><rect x="4" y="1" width="7" height="5" fill="#fff" /><rect x="3" y="8" width="10" height="7" fill="#f4f4f4" /><path d="M4 10h8M4 13h8" stroke="#d03040" /></svg>} />
          <Task size={LARGE} label="工程系统   版本..." icon={<svg width="15" height="16" viewBox="0 0 15 16" className="shrink-0"><rect width="15" height="16" rx="2" fill="#e4f2ea" /><path d="M3 15L6 2h5q3 3-1 7H5" fill="none" stroke="#18985c" strokeWidth="2.500" /></svg>} />
          <Task size={LARGE} label="制作规范 (Ver:1...." icon={<svg width="16" height="16" viewBox="0 0 16 16" className="shrink-0"><rect x="2" y="1" width="12" height="14" fill="#e8f8fc" /><path d="M2 3h12M2 6h12M2 9h12M2 12h12" stroke="#28a8c8" strokeWidth="1.500" /></svg>} />
          <Task size={LARGE} label="左湘文" icon={<svg width="16" height="16" viewBox="0 0 16 16" className="shrink-0"><rect width="16" height="16" rx="2" fill="#1a5ca8" /><path d="M3 13L5 5q1-2 4-2h5l-1 3H9L8 8h5l-1 2H8q-2 0-5 3z" fill="#fff" /></svg>} />
          <Task size={LARGE} label="get.exe" icon={<Bird />} />
          <Task label="Engineering Toolki..." icon={<XWindowIcon />} />
          <Task size={LARGE} label="Progress" icon={<XWindowIcon />} />
        </div>
        <div className="flex gap-[2px]">
          <Task label="Graphic Editor 9.07..." icon={<XWindowIcon />} />
          <Task label="Dialog Box" icon={<XWindowIcon />} state="selected" />
          <Task label="2V1980B6A0-预审..." icon={<ExcelIcon />} />
          <Task label="FCGGC016001012-..." icon={<ExcelIcon />} />
          <Task label="2V1980B6A0制作..." icon={<ExcelIcon />} />
          <Task label="Q12V1980B6A0(ms..." icon={<ExcelIcon />} />
          <Task label="CAM_Guide v2.56" icon={<Bird />} />
          <Task size={LARGE} label="3457-06(1)-02 P..." icon={<AdobeIcon />} state="pressed" />
          <Task size={LARGE} label="2v1980b6a0.txt - ..." icon={<svg width="16" height="16" viewBox="0 0 16 16" className="shrink-0"><rect x="2" y="1" width="12" height="14" fill="#f0f6fc" stroke="#5a88b8" /><path d="M4 6l2-3 2 3M9 4h3M9 6h3M4 9h8M4 11h8M4 13h6" stroke="#4078b0" fill="none" /></svg>} />
        </div>
      </div>
      <span className="mt-[5px] ml-[10px] h-[42px] w-[3px] shrink-0 border-l border-white border-r border-r-[#808080]" />
      <div className="ml-2 flex w-[18px] shrink-0 flex-col items-center gap-1 pt-[6px]">
        <Pic x={599} y={494}><path d="M606 508h38l4 30h-48zM624 508q0-8 10-6t8-6" fill="#bbb" stroke="#666" strokeWidth="3" /><path d="M606 518h36M606 526h36" stroke="#555" strokeWidth="3" strokeDasharray="4 3" /></Pic>
        <svg width="9" height="16" viewBox="0 0 9 16" fill="none" stroke="#000"><path d="M3 1.500h5.500v4H3zM1 3.500h5.500v4H1z" fill="#d4d0c8" /><path d="M2 12h5l-2.500 3z" fill="#000" stroke="none" /></svg>
      </div>
      <div className="mt-[3px] mr-[2px] ml-1 flex h-[46px] w-[218px] shrink-0 border border-t-[#808080] border-l-[#808080] border-r-white border-b-white pl-[5px]">
        <svg width="8" height="10" viewBox="0 0 8 10" className="mt-[5px] shrink-0" fill="none" stroke="#000" strokeWidth="1.300"><path d="M1 4l3-3 3 3M1 8l3-3 3 3" /></svg>
        <div className="ml-[9px] grid shrink-0 grid-cols-[repeat(5,16px)] content-start gap-x-2 gap-y-[6px] pt-[3px]">
          <Pic x={729} y={497}><path d="M734 504l38 38M770 504l-38 38" stroke="#6a1478" strokeWidth="9" /></Pic>
          <Pic x={800} y={497}><rect x="803" y="500" width="38" height="38" rx="4" fill="#1878d0" /><circle cx="822" cy="518" r="15" fill="#fff" /><path d="M809 518l9-7v14zM835 518l-9-7v14zM812 518h20" fill="#1878d0" stroke="#1878d0" strokeWidth="3" /><rect x="828" y="532" width="19" height="12" rx="5" fill="#50c030" /></Pic>
          <Pic x={872} y={497}><rect x="879" y="499" width="36" height="46" rx="16" fill="#123870" /><path d="M887 511l20 20-10 10v-38l10 10-20 20" fill="none" stroke="#fff" strokeWidth="3" /></Pic>
          <Pic x={944} y={497}><path d="M967 502l17 6q2 24-17 34-19-10-17-34z" fill="#4c9c28" stroke="#e8f0e0" strokeWidth="4" /><path d="M972 508l-14 16h8l-4 12 14-16h-8z" fill="#fff" /></Pic>
          <Pic x={1017} y={497}><path d="M1056 504Q1026 502 1024 524Q1026 540 1044 540" fill="none" stroke="#e02818" strokeWidth="9" /><path d="M1032 518h24" stroke="#e02818" strokeWidth="6" /><rect x="1040" y="526" width="23" height="17" rx="3" fill="#fce0a8" stroke="#b07020" strokeWidth="3" /></Pic>
          <Pic x={729} y={565}><path d="M730 606l24-36v24z" fill="#e81010" /><path d="M754 570l22 36-18-12z" fill="#20e030" /></Pic>
          <Pic x={800} y={565}><path d="M804 578l22-12 22 4-8 14-30 6zM810 596l18-6v14l-20 4z" fill="#1c88dc" /><circle cx="834" cy="595" r="14" fill="#f8c020" /><path d="M826 591h16M826 599h16" stroke="#a06000" strokeWidth="3" /></Pic>
          <Pic x={872} y={565}><rect x="890" y="576" width="28" height="24" fill="#888" stroke="#f4f4f4" strokeWidth="3" /><path d="M894 606h22M878 568v14h12v-14M884 582v22h8" fill="none" stroke="#444" strokeWidth="4" /></Pic>
          <Pic x={944} y={565}><rect x="950" y="572" width="18" height="34" fill="#eee" stroke="#555" strokeWidth="3" /><path d="M962 580h24v10q-4 8-12 8t-12-8zM968 580v-12M980 580v-12M974 598v10" fill="#fff" stroke="#333" strokeWidth="3" /></Pic>
          <Pic x={1017} y={565}><path d="M1019 582h9l12-12v36l-12-12h-9z" fill="#eee" stroke="#555" strokeWidth="3" /><path d="M1046 578q6 10 0 20M1053 573q10 15 0 30" fill="none" stroke="#777" strokeWidth="3" /></Pic>
        </div>
        <div className="flex w-[70px] shrink-0 flex-col items-center gap-[3px] pt-[5px] pl-2 text-[11px]">
          <span>1:17</span>
          <span>2016/10/14</span>
        </div>
        <svg width="16" height="14" viewBox="0 0 16 14" className="mt-4 -ml-1 shrink-0"><rect x="1" y="1" width="14" height="10" fill="#1c5cb0" stroke="#0c2c60" /><path d="M2 2h12L2 8z" fill="#5898e0" /><path d="M1 12.500h8" stroke="#2a6ac0" strokeWidth="2" /></svg>
      </div>
    </footer>
  );
}

export default function App() {
  return (
    <div className="relative flex h-screen flex-col overflow-hidden bg-[#d4d0c8]">
      <div className="flex min-h-0 grow flex-col border-l border-white bg-[#d4d0c8] pt-1 pl-[3px]">
        <TitleBar />
        <Header />
        <div className="flex min-h-0 grow">
          <Sidebar />
          <BoardView />
          <Palette />
        </div>
        <CommandLine />
      </div>
      <ReaderWindow />
      <TaskBar />
      <Annotations />
    </div>
  );
}
